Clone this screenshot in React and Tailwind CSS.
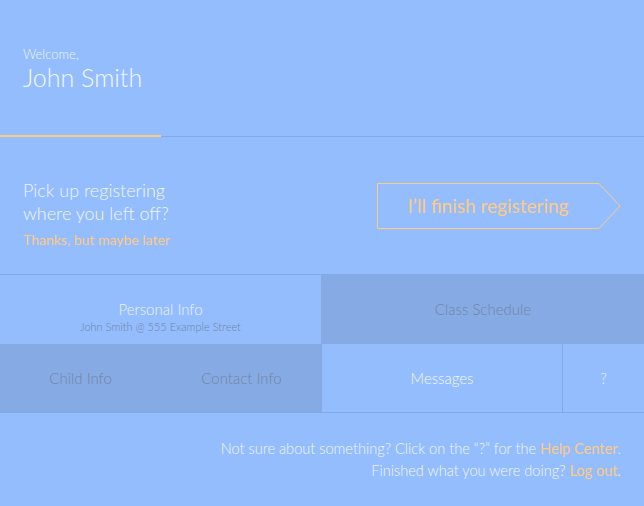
export default function App() {
  return (
    <div className="w-[644px] h-[506px] bg-[#94bdfd] font-['Lato',sans-serif] font-light text-white overflow-hidden">
      {/* Header */}
      <div className="h-[136px] px-[23px] pt-[46px]">
        <div className="text-[13px] leading-[16px] text-[#eef3ff]">Welcome,</div>
        <div className="text-[25px] leading-[30px] text-[#f6f9ff]">John Smith</div>
      </div>
      <div className="relative h-px bg-[#84a9e4]">
        <div className="absolute left-0 -top-px h-[2px] w-[161px] bg-[#fdca84]" />
      </div>

      {/* Resume registration */}
      <div className="h-[137px] flex items-start justify-between px-[23px]">
        <div className="mt-[42px]">
          <div className="text-[18px] leading-[23px] text-[#f3f7ff]">Pick up registering</div>
          <div className="text-[18px] leading-[23px] text-[#f3f7ff]">where you left off?</div>
          <div className="mt-[5px] text-[14px] leading-[20px] font-normal text-[#fdca84]">Thanks, but maybe later</div>
        </div>
        <button className="relative mt-[46px] w-[244px] h-[46px] flex items-center">
          <svg className="absolute inset-0" width="244" height="46" viewBox="0 0 244 46">
            <path d="M0.5 0.5 H222 L243 23 L222 45.5 H0.5 Z" fill="none" stroke="#fdca84" strokeWidth="1" />
          </svg>
          <span className="relative w-[222px] text-center text-[19px] font-normal text-[#fdca84]">I’ll finish registering</span>
        </button>
      </div>

      {/* Grid */}
      <div className="border-t border-b border-[#84a9e4]">
        <div className="flex h-[69px]">
          <div className="w-[322px] flex flex-col items-center justify-center pt-[14px] border-r border-[#84a9e4]">
            <div className="text-[15px] leading-[20px] text-[#eef3ff]">Personal Info</div>
            <div className="text-[11px] leading-[16px] text-[#73849f]">John Smith @ 555 Example Street</div>
          </div>
          <div className="flex-1 flex items-center justify-center bg-[#86abe4] text-[15px] text-[#73849f]">Class Schedule</div>
        </div>
        <div className="flex h-[68px]">
          <div className="w-[322px] flex bg-[#86abe4] text-[15px] text-[#73849f]">
            <div className="w-[161px] flex items-center justify-center">Child Info</div>
            <div className="w-[161px] flex items-center justify-center">Contact Info</div>
          </div>
          <div className="w-[241px] flex items-center justify-center border-r border-[#84a9e4] text-[15px] text-[#f3f7ff]">Messages</div>
          <div className="flex-1 flex items-center justify-center text-[15px] text-[#eef3ff]">?</div>
        </div>
      </div>

      {/* Footer */}
      <div className="pt-[25px] pr-[23px] text-right text-[14.6px] leading-[22px] text-[#f3f7ff]">
        <div>
          Not sure about something? Click on the “?” for the <span className="font-normal text-[#fdca84]">Help Center</span>.
        </div>
        <div>
          Finished what you were doing? <span className="font-normal text-[#fdca84]">Log out</span>.
        </div>
      </div>
    </div>
  );
}
